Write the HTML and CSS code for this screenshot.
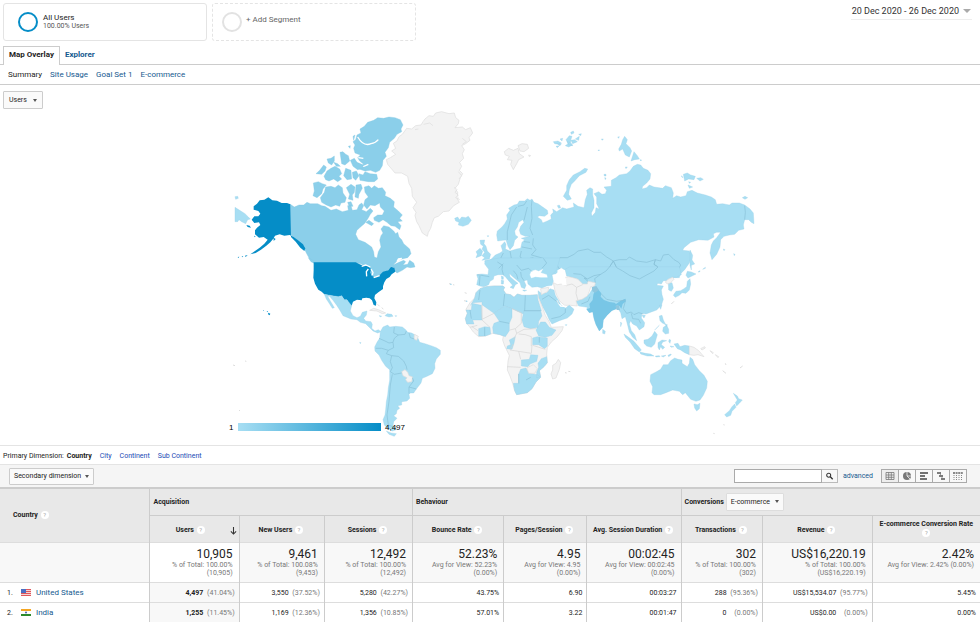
FILE: index.html
```html
<!DOCTYPE html>
<html lang="en">
<head>
<meta charset="utf-8">
<title>Location report</title>
<link rel="stylesheet" href="styles.css">
</head>
<body>
<header class="top">
  <button class="segment" type="button">
    <span class="ring"></span>
    <span class="segment-text"><span class="segment-name">All Users</span><span class="segment-sub">100.00% Users</span></span>
  </button>
  <button class="segment add" type="button">
    <span class="ring"></span>
    <span class="segment-text">+ Add Segment</span>
  </button>
  <button class="date" type="button">20 Dec 2020 - 26 Dec 2020 <span class="caret"></span></button>
</header>

<nav class="tabs">
  <a class="tab active" href="#map">Map Overlay</a>
  <a class="tab" href="#explorer">Explorer</a>
</nav>
<nav class="subtabs">
  <a class="current" href="#summary">Summary</a>
  <a href="#usage">Site Usage</a>
  <a href="#goals">Goal Set 1</a>
  <a href="#ecommerce">E-commerce</a>
</nav>

<main>
<section class="map" id="map">
  <button class="drop" type="button">Users <span class="caret"></span></button>
  <svg class="world" viewBox="220 109 540 331" role="img" aria-label="Users by country">
    <defs>
      <linearGradient id="scale"><stop offset="0" stop-color="#a7def3"/><stop offset="1" stop-color="#058dc7"/></linearGradient>
    </defs>

    <!-- North America, northern part -->
    <g transform="translate(225 105) scale(.33333)">
      <path class="none" d="M600,42L612,32 625,34 632,24 650,20 672,26 688,24 692,38 702,46 700,56 690,68 712,66 722,74 736,68 743,84 732,98 735,106 722,116 710,122 718,134 712,146 716,160 704,172 710,184 703,196 713,206 706,218 700,238 690,250 698,262 697,282 703,292 686,302 672,318 655,320 640,334 628,338 622,352 617,370 610,382 607,394 592,384 582,362 575,350 570,332 573,322 564,308 575,292 562,274 560,250 552,235 548,214 530,204 510,204 500,192 488,178 484,164 496,158 512,148 500,138 512,130 505,115 516,108 522,95 532,88 545,70 560,72 572,62 588,60 594,50Z"/>
      <path class="none" d="M688,246l8,8-6,8 10,8-8,8 12,6M700,200l10,12-8,10M712,100l12,10-12,8M596,58l18-4 10 8M570,74l10-2"/>
      <path class="mid" d="M405,72L418,64 428,52 446,46 458,38 476,40 492,36 510,38 526,44 534,60 528,72 530,80 516,88 508,100 494,112 490,128 480,142 484,154 474,166 472,182 464,196 452,202 436,196 420,198 402,192 398,182 416,178 404,168 398,158 406,150 390,144 386,130 390,120 384,110 392,104 396,90 408,84Z"/>
      <path class="gap" d="M398,96Q416,126 438,116 452,114 460,104M400,158L415,160M412,186L430,178"/>
      <path class="mid" d="M402,206L414,210 420,200 436,206 455,208 458,222 448,230 430,230 405,226ZM345,142L354,140 362,148 370,152 374,168 360,180 350,176ZM376,166L388,160 396,172 410,178 416,188 398,194 384,184ZM306,162L318,160 328,153 328,168 320,180 310,174ZM273,206L284,196 296,180 304,186 300,198 290,208ZM297,214L306,198 318,190 330,184 344,192 350,206 342,214 350,222 338,230 326,222 312,228 302,224ZM326,172L338,176 346,184 334,184ZM362,190L378,196 380,222 366,224 356,212ZM382,202L394,198 402,212 392,226 384,218ZM384,94L390,90 386,106ZM370,124l6-2-1,8z"/>
      <path class="mid" d="M265,234L280,230 292,236 304,240 294,252 290,266 276,278 264,272 268,258ZM286,278L298,262 302,246 318,244 330,248 340,240 352,248 354,264 364,278 360,292 348,294 344,304 332,300 318,306 304,300 290,292ZM364,248L378,238 390,246 388,262 382,270 384,286 370,282 374,268ZM393,240L408,238 412,250 402,268 400,280 390,276ZM368,292l10-2 6,14-12,0z"/>
      <path class="mid" d="M418,246L432,242 440,250 448,242 460,250 472,248 482,262 480,272 496,280 508,290 506,306 520,318 532,330 524,340 532,348 518,350 528,362 524,374 510,364 498,362 486,352 474,344 462,352 448,346 446,338 458,330 472,330 478,318 466,306 464,294 450,302 436,300 426,312 416,300 420,284 430,276 420,262Z"/>
      <path class="mid" d="M196,298L208,306 222,300 236,300 246,292 256,296 278,296 290,302 300,304 318,316 334,312 352,320 370,316 368,302 378,302 382,316 396,314 402,300 410,294 416,302 410,314 424,320 436,310 444,318 436,328 428,342 418,356 404,368 396,376 392,388 400,404 420,412 440,426 446,440 448,456 456,459 460,440 468,426 464,406 468,392 474,384 468,372 476,362 492,366 506,378 512,386 518,382 522,396 530,404 536,416 554,432 558,446 548,458 530,462 514,470 504,480 522,472 536,466 542,470 534,480 548,478 554,466 566,474 570,486 556,488 546,486 532,496 516,504 510,498 506,486 494,492 482,500 468,508 454,516 442,515 436,500 424,488 408,476 392,474 272,474 262,470 254,462 246,448 240,436 238,424 220,408 206,396 196,390Z"/>
      <path class="gap" d="M520,462l10-2-14,10zM426,360l16-6 10,6"/>
      <path class="mid" d="M422,352l10-6 14,10-6,6zM250,458l16,10 4,8-12-6z"/>
      <path class="high" d="M196,298L186,294 170,294 156,287 142,286 130,277 118,284 104,286 96,296 86,304 86,314 100,318 106,326 100,334 88,334 80,344 88,354 102,352 106,360 96,368 90,376 90,388 102,398 116,396 128,404 118,416 104,428 90,438 76,448 92,444 108,434 124,422 136,412 146,400 150,392 164,388 178,392 194,390 206,396 222,408 234,418 241,430 238,438 226,428 212,410 198,396ZM146,398l6,4-6,6zM64,360l10,2 4,6-10-2zM60,452l8-2-6,6zM38,456l5-1-3,4zM50,454l5,0-3,3zM88,392l4,2-4,3z"/>
      <path class="low" d="M30,307L44,316 60,326 70,336 76,342 68,344 62,356 50,350 42,344 38,350 30,350ZM30,275l8-1 2,6-8,3z"/>
      <path class="low" d="M689,340L698,336 704,344 710,336 722,338 730,334 739,346 730,358 714,364 700,360 702,352 692,348Z"/>
    </g>

    <!-- United States, Central and South America -->
    <g transform="translate(225 255) scale(.33333)">
      <path class="high" d="M266,22L392,22 404,28 416,32 428,32 438,42 436,52 440,62 448,66 462,62 474,50 490,46 498,36 508,38 511,50 500,58 494,66 484,72 478,82 474,94 474,102 460,112 450,120 448,130 454,142 453,152 446,150 441,136 434,130 424,128 412,130 410,136 396,134 384,140 380,152 372,146 366,134 358,134 350,122 340,125 322,122 298,118 290,110 280,104 270,86 265,68 266,46Z"/>
      <path class="gap" d="M410,34L422,30 436,36M425,64L424,50 430,42M438,42L444,52 442,60M446,68L464,62"/>
      <path class="high" d="M130,173l6,3-2,5-5-3zM125,168l4,1-2,3zM114,165l3,1-2,2z"/>
      <path class="low" d="M298,118L322,122 340,125 350,122 358,134 366,134 380,152 376,168 384,182 396,188 406,184 412,172 426,168 424,180 416,190 422,198 438,200 442,208 440,220 450,228 460,224 468,230 458,234 444,228 432,216 422,206 406,202 396,194 378,192 354,182 346,168 336,152 324,136 314,124 308,124 316,138 328,158 322,160 312,144 304,132Z"/>
      <path class="none" d="M434,166L446,160 460,164 482,174 472,176 456,168Z"/>
      <path class="low" d="M480,182L486,176 500,178 504,184 492,186ZM462,182l8,1-3,3zM510,182l5,0-2,3zM404,262l4,1-2,3z"/>
      <path class="low" d="M466,230L474,216 488,210 494,216 512,214 532,216 542,224 548,232 560,234 574,242 580,252 584,262 600,266 618,272 634,278 646,286 646,298 634,312 629,326 630,340 622,356 606,364 592,370 588,384 574,402 566,414 556,414 552,418 554,430 546,438 530,440 530,450 518,452 524,460 516,466 514,476 506,482 516,490 506,500 504,512 514,524 502,528 488,520 478,510 474,494 480,480 482,464 484,440 488,420 490,398 494,376 494,344 482,334 470,316 462,300 450,288 449,276 456,262 464,250Z"/>
      <path class="low" d="M484,528L498,534 514,536 508,544 492,538Z"/>
      <path class="none" d="M530,350L540,344 548,352 552,362 563,366 560,380 548,382 542,374 546,368 534,362ZM568,238L580,244 575,256 567,252Z"/>
      <path class="line" d="M508,216L506,234 520,240 508,250 504,262 492,264 480,258 462,250M520,240L540,238 544,228M552,234L556,248 568,252M504,262L506,278 490,286 484,296 500,302 520,304 536,318 544,334 546,344M490,286L470,280 452,280M500,302L496,320 502,338 496,350 508,358 530,354M502,358L496,390 492,440 486,480 490,510 506,516M562,368L566,378 552,396 552,416M552,396L574,402"/>
      <path class="faint" d="M24,330l6,2M60,318l4,1M42,466l3,1M458,148l6,6M470,158l5,4M672,86l6,1M684,89l4,1"/>
    </g>

    <!-- Europe and northern Asia -->
    <g transform="translate(450 125) scale(.33333)">
      <path class="low" d="M143,348L140,330 142,318 156,306 164,296 172,282 170,270 180,256 176,250 192,240 202,238 208,228 224,228 232,221 240,226 246,222 252,232 264,236 278,246 292,256 294,266 284,274 268,272 262,276 274,284 278,294 292,288 304,282 302,270 310,262 308,252 320,260 338,248 350,252 372,246 370,234 384,244 402,248 406,224 412,208 410,196 420,188 428,192 428,210 432,226 432,248 424,264 426,274 436,262 438,248 448,252 440,236 440,216 432,206 446,200 456,208 466,206 470,196 462,186 484,184 484,166 498,158 508,150 530,146 540,138 550,124 562,118 572,120 580,130 594,136 602,146 600,162 590,174 578,184 576,192 590,188 598,180 612,186 638,190 646,182 664,188 670,204 668,220 680,212 692,216 708,212 712,200 726,196 742,204 766,210 784,216 796,224 800,238 818,236 838,240 846,234 868,234 884,240 900,252 910,264 912,296 904,292 896,284 884,284 880,300 882,312 866,316 854,328 838,330 822,334 812,344 810,366 800,388 786,404 780,384 784,360 790,348 800,338 812,322 800,322 790,326 792,336 774,346 746,344 722,352 702,368 698,376 718,378 724,394 718,414 704,434 690,448 688,458 360,456 346,434 330,432 318,446 300,450 280,444 240,446 200,440 140,440 115,420 104,408 122,404 136,390 150,384 158,378 153,362 164,350 168,358 166,372 180,378 200,372 212,370 216,352 224,344 214,340 240,334 226,334 212,328 208,316 212,304 222,292 218,284 206,292 202,306 194,318 196,330 204,336 194,346 190,362 180,374 174,364 168,345 158,346Z"/>
      <path class="low" d="M90,346L104,345 102,356 108,364 112,378 122,388 118,402 96,406 104,398 96,392 104,382 96,372 100,364 92,358ZM78,380L90,370 98,378 94,392 78,398 82,388Z"/>
      <path class="low" d="M340,214L350,196 350,182 358,164 370,150 390,140 404,130 413,132 408,142 388,152 374,168 364,178 358,194 356,208 364,222 352,226ZM322,242l6-2 4,8-6,2zM462,148l6,0 0,5-5,0zM464,158l4,1-2,5z"/>
      <path class="low" d="M506,72L514,58 518,44 524,34 532,44 528,56 540,68 545,78 538,96 526,90 518,72 508,78ZM543,108L552,80 562,92 568,102 554,104ZM503,36l5-1-2,5zM526,126l6,0-4,5zM570,104l5,1-3,3z"/>
      <path class="low" d="M310,50l14-2 10,6-8,4-12-2zM330,42l8-2-2,8zM348,44l10-12 8,2-4,12 12-2 8,6-14,6-4-8-10,8zM346,62l8-6 14,4-12,6zM362,22l8-4 2,6-8,4zM376,42l12-8-2,12zM386,28l8-2-2,6zM318,64l10-2-6,6zM454,42l6,0-3,4zM444,75l5,0-3,3zM352,50l10,2 6,10-12-2zM322,56l12,0-4,6z"/>
      <path class="low" d="M700,148L712,144 722,150 736,154 732,164 716,162 704,168ZM740,160L752,158 760,163 750,168ZM714,180L728,186 718,190ZM695,152l4,6-4,-2zM877,218l8-4 8,4-8,5zM716,170l6,2-4,3z"/>
      <path class="none" d="M163,80L176,70 190,76 204,70 208,86 222,96 206,104 200,116 190,134 182,118 186,106 172,104 178,94 166,90ZM204,62L216,56 232,58 236,70 222,80 210,78ZM236,90l6,2-4,3z"/>
      <path class="line" d="M246,226L244,244 246,280 240,310 248,330M230,228L222,240 204,244M200,246L184,270 178,296 172,320 172,345M232,246L226,270 222,286M884,242L886,262 884,284"/>
      <path class="line" d="M318,410L330,398 352,398 372,388 384,378 414,372 432,382 452,382 470,396 490,408 508,404 530,404 538,396 560,408 590,412 616,404 632,408 640,390 656,388 672,404 686,412 692,420 684,436 690,448M490,408L480,424 468,438 452,448 432,452 412,462 392,448 370,446M490,408L500,428 518,438 540,452 568,462 590,450 612,438 624,426 612,418 616,404M250,340L248,360 258,374 244,390 280,400 290,414 276,430M222,350L240,352M216,366L246,372M214,378L210,396 222,404 250,398M180,378L184,400 206,406 222,404M160,384L152,400 160,416 146,430M184,400L164,404M206,406L200,420 184,420 160,416M200,420L214,436 236,430 246,440M222,404L218,420M318,410L326,430 336,432"/>
      <path class="low" d="M820,372l5,2-3,3zM851,386l4,2-2,4zM112,332l4,0-2,4z"/>
    </g>

    <!-- Southern Europe, Africa, southern Asia and Oceania -->
    <g transform="translate(450 240) scale(.33333)">
      <path class="low" d="M105,62L124,58 150,54 330,54 320,90 306,104 310,124 306,136 290,138 276,144 262,140 246,142 234,132 232,120 222,122 228,136 224,146 214,142 210,128 200,120 186,108 178,100 180,110 194,122 204,130 196,134 190,146 180,142 188,136 176,122 166,110 158,104 144,104 132,108 130,118 120,124 116,134 102,140 90,138 80,134 84,116 80,104 96,102 114,104 116,88 104,72Z"/>
      <path class="low" d="M154,108l6,2 0,8-5,0zM154,120l7,2-1,10-6,0zM218,150l12,1-8,3z"/>
      <path class="gap solid" d="M244,94L256,90 266,94 278,88 272,98 290,104 292,112 272,112 256,110 244,114 240,104Z"/>
      <path class="low" d="M345,88L360,80 688,80 694,104 680,112 666,112 652,122 640,122 634,132 624,130 620,136 640,138 634,150 636,164 640,178 634,196 620,210 604,216 588,222 576,220 574,234 584,248 582,260 568,270 560,258 548,252 542,242 538,252 544,272 554,284 560,302 548,292 538,276 532,252 526,230 516,236 512,218 504,206 495,205 484,212 470,226 460,240 458,262 448,273 438,254 432,236 428,215 418,218 410,208 412,202 386,198 378,184 400,175 418,162 430,142 428,130 400,134 380,116 350,108Z"/>
      <path class="none" d="M310,128L322,134 336,132 350,138 346,112 356,110 372,114 384,118 398,132 412,132 414,124 436,128 434,138 422,140 418,154 412,168 396,178 378,182 382,198 362,196 344,196 330,184 320,166 314,148Z"/>
      <path class="edge" d="M350,136L366,132 380,142 378,160 384,182M380,142L398,134"/>
      <path class="gap solid" d="M322,92L334,84 344,92 338,102 348,116 350,136 336,134 334,120Z"/>
      <path class="low" d="M264,152L274,160 290,158 300,146 312,150 316,166 326,182 332,194 346,204 358,196 372,208 366,222 352,234 328,242 306,252 298,240 290,222 278,200 266,174Z"/>
      <path class="none" d="M272,146L296,142 294,154 274,164Z"/>
      <path class="gap" d="M320,182L332,198 350,200"/>
      <path class="line" d="M276,178L296,166 330,192M304,236L330,230 346,218 346,206"/>
      <path class="line" d="M490,63L480,79 468,93 452,103 432,107 412,117 392,103 370,101M490,63L500,83 518,93 540,107 568,117 590,105 612,93 624,81 612,73 616,59M276,85L290,69 280,55M200,75L214,91 236,85 246,95M160,71L146,85M212,96L214,110 222,122M190,92L200,104 204,118M82,104L118,110M90,108L88,136M142,66L158,76 156,88 160,104M414,124L402,114 412,117M436,128L434,116 452,103"/>
      <path class="india" d="M436,148L446,150 454,160 452,170 462,180 478,186 494,188 498,192 512,182 526,176 528,184 518,192 514,206 508,198 500,196 498,208 486,212 472,226 460,240 458,262 448,273 438,254 432,236 428,216 418,218 410,208 420,204 418,192 428,180 430,164Z"/>
      <path class="low" d="M458,268L466,274 464,282 458,280ZM512,246l3,4-3,10zM576,226l10,0-4,8zM628,196l8-2-4,14z"/>
      <path class="shade" d="M425,142l14-4 8,12-12,8-8-4zM496,198l10-2 4,14-10,0z"/>
      <path class="line" d="M526,184L520,206 530,220M530,220L544,216 552,224 566,218 580,222M544,220L548,236 566,238 572,250M528,180L500,184 470,178 452,160M420,170L414,184 394,192"/>

      <path class="none" d="M90,146L108,140 132,138 158,138 164,142 160,150 168,162 182,164 192,172 202,162 216,166 240,166 262,164 270,184 278,204 286,226 298,246 304,262 340,260 336,272 322,290 304,306 292,322 290,342 292,368 282,380 268,392 272,412 258,426 246,446 232,458 200,464 194,452 188,430 180,408 172,390 174,364 178,346 170,330 164,318 158,300 160,288 150,284 128,280 106,288 86,290 70,276 60,262 50,250 46,236 52,220 48,208 60,188 74,174 78,158Z"/>
      <path class="low" d="M90,146L108,140 132,138 158,138 164,142 160,150 168,162 182,164 192,172 202,162 216,166 240,166 262,164 264,180 274,212 222,212 220,222 186,206 164,198 132,220 96,194 96,186 66,188 62,196 74,174 78,158Z"/>
      <path class="low" d="M132,220L164,198 186,206 186,232 178,250 178,272 166,290 150,284 130,280 128,262 132,250 148,244ZM48,210L64,210 66,190 94,196 96,240 68,240 72,252 50,252 46,236 52,220ZM86,266L104,260 120,262 122,282 106,288 86,288ZM222,212L272,212 276,228 266,244 264,262 242,266 222,260 216,240ZM272,246L286,246 298,262 318,270 306,286 286,292 266,288 258,270ZM248,294L262,290 292,294 292,318 284,326 266,314 248,314ZM178,300L196,290 192,310 186,328 170,326 172,318 182,314ZM214,360L238,358 242,344 264,346 260,364 240,372 234,380 214,378ZM264,370L274,356 290,350 292,368 282,380 268,392 272,410 260,414 260,396 266,382ZM190,430L206,430 206,402 212,388 228,384 238,400 262,404 272,412 258,426 246,446 232,458 200,464 194,452Z"/>
      <path class="line" d="M164,162L160,198M226,166L224,212M90,150L86,180M60,210L64,236M148,244L178,250M104,262L104,288M206,402L206,430M228,420L242,412M222,212L272,212M268,308L268,292"/>
      <path class="edge" d="M186,206L214,218 214,250 196,266 180,270M196,266L200,280 190,300M200,280L222,268 258,266M190,312L180,330 206,334 212,358M206,334L244,340 246,316M172,380L212,382M120,262L96,240M66,260L84,272M248,316L286,328M96,194L96,238 132,220M244,318L244,290 226,284 206,282M60,262L82,256"/>
      <path class="none" d="M325,358L332,368 328,388 318,414 308,417 303,402 308,390 308,376 318,370ZM230,384L250,374 262,386 254,400 236,400Z"/>

      <path class="low" d="M602,404L618,396 632,388 640,374 654,374 662,362 674,354 684,358 696,360 696,370 712,380 718,370 720,352 728,358 734,374 748,392 762,406 772,424 770,444 760,466 750,480 738,484 722,478 714,468 706,458 698,464 688,454 668,450 648,458 632,464 612,464 606,458 608,440 600,424ZM732,492L742,494 750,490 748,506 740,513 734,504Z"/>
      <path class="low" d="M850,460L862,468 866,476 877,480 868,490 860,498 856,488 862,480ZM854,492L858,502 846,514 842,526 830,531 824,524 838,512 846,500Z"/>
      <path class="low" d="M522,282L536,292 552,304 566,320 574,330 568,336 554,326 540,306 526,292ZM570,336L586,340 602,342 612,348 592,348 572,342ZM616,348l12-1 2,3-12,1zM634,348l14-2-8,5zM654,346l8-4 2,2-8,6zM582,300L594,298 606,288 614,274 622,284 618,298 614,312 604,322 590,318 582,310ZM624,308L636,300 650,302 638,306 634,314 644,322 638,328 632,320 628,330 624,322ZM658,298l4,2-2,10-4-6zM660,318l12,2-8,2zM672,312L684,310 690,320 704,316 718,318 718,344 704,338 692,330 682,326Z"/>
      <path class="low" d="M628,228L636,226 640,240 646,252 638,250 630,242ZM640,262L650,256 656,268 656,280 646,282 638,274ZM614,270L628,256 618,266ZM644,252l8,2-2,6z"/>
      <path class="none" d="M718,318L732,322 746,332 762,350 744,344 732,346 718,344ZM752,326l12-6 2,4-10,6zM780,332l10,6-2,3zM796,344l10,6-2,3z"/>
      <path class="low" d="M670,166L678,154 692,152 702,146 710,140 712,124 720,116 722,132 718,150 708,160 696,158 688,166 676,172ZM712,94L724,96 738,102 726,108 714,114 708,106ZM655,130L666,128 670,144 664,154 656,150ZM720,30L728,46 726,60 734,72 724,76 724,90 720,76ZM744,96l6-4 0,3zM758,88l8-6 0,3z"/>
      <path class="none" d="M646,126L654,118 668,112 672,118 662,128 652,132Z"/>
      <path class="faint" d="M818,392l10,8M870,384l8-6M826,370l2,5M345,398l5,1M355,394l6,1M672,184l-8,8M820,554l4,1M790,580l4,1M44,158l6,2M42,182l8,2"/>
      <path class="low" d="M0,132l5,0-2,3zM48,182l4,1-2,3zM346,254l5,0-3,3z"/>
    </g>

    <rect x="238" y="423" width="143" height="8" fill="url(#scale)"/>
    <text class="legend" x="229" y="430">1</text>
    <text class="legend" x="385" y="430">4,497</text>
  </svg>
</section>

<nav class="dimensions">
  <span>Primary Dimension:</span>
  <a class="current" href="#country">Country</a>
  <a href="#city">City</a>
  <a href="#continent">Continent</a>
  <a href="#sub">Sub Continent</a>
</nav>

<div class="toolbar">
  <button class="drop" type="button">Secondary dimension <span class="caret"></span></button>
  <form class="search">
    <input type="text" aria-label="Search table">
    <button type="button" aria-label="Search"><svg viewBox="0 0 10 10"><circle cx="4" cy="4" r="2.5" fill="none" stroke="#333" stroke-width="1.3"/><path d="M6 6l3 3" stroke="#333" stroke-width="1.7"/></svg></button>
  </form>
  <a class="advanced" href="#advanced">advanced</a>
  <div class="views">
    <button type="button" aria-label="Data table"><svg viewBox="0 0 10 10"><path d="M1 1.5h8v7H1zM1 4h8M1 6.300h8M3.700 1.500v7M6.300 1.500v7" fill="none" stroke="#777" stroke-width=".8"/></svg></button>
    <button type="button" aria-label="Percentage"><svg viewBox="0 0 10 10"><circle cx="5" cy="5" r="4" fill="#777"/><path d="M5 1v4h4M5 5l3 3" fill="none" stroke="#f5f5f5" stroke-width=".8"/></svg></button>
    <button type="button" aria-label="Performance"><svg viewBox="0 0 10 10"><path d="M1 2h8M1 5h5M1 8h7" stroke="#444" stroke-width="1.6"/></svg></button>
    <button type="button" aria-label="Comparison"><svg viewBox="0 0 10 10"><path d="M1 2h4M3 5h4M5 8h4" stroke="#555" stroke-width="1.5"/><path d="M4.500 1v5M6 4v5" stroke="#777" stroke-width=".7"/></svg></button>
    <button type="button" aria-label="Pivot"><svg viewBox="0 0 10 10"><path d="M0 2h10" stroke="#666" stroke-width="1.600" stroke-dasharray="2 .6"/><path d="M1 4v5M3.500 4v5M6 4v5M8.500 4v5" stroke="#888" stroke-width="1" stroke-dasharray="1 1"/></svg></button>
  </div>
</div>

<table class="report">
  <colgroup><col class="c-country"><col class="c-users"><col class="c-new"><col class="c-sessions"><col class="c-bounce"><col class="c-pages"><col class="c-duration"><col class="c-trans"><col class="c-revenue"><col class="c-rate"></colgroup>
  <thead>
    <tr class="groups">
      <th rowspan="2" class="country">Country <span class="help">?</span></th>
      <th colspan="3">Acquisition</th>
      <th colspan="3">Behaviour</th>
      <th colspan="3"><span class="conv">Conversions <button class="drop" type="button">E-commerce <span class="caret"></span></button></span></th>
    </tr>
    <tr class="metrics">
      <th><span class="sorted"><span>Users <span class="help">?</span></span><svg viewBox="0 0 8 9"><path d="M4 0v8M1 5l3 3 3-3" fill="none" stroke="#333" stroke-width="1.2"/></svg></span></th>
      <th>New Users <span class="help">?</span></th>
      <th>Sessions <span class="help">?</span></th>
      <th>Bounce Rate <span class="help">?</span></th>
      <th>Pages/Session <span class="help">?</span></th>
      <th>Avg. Session Duration <span class="help">?</span></th>
      <th>Transactions <span class="help">?</span></th>
      <th>Revenue <span class="help">?</span></th>
      <th class="stacked">E-commerce Conversion Rate<br><span class="help">?</span></th>
    </tr>
  </thead>
  <tbody>
    <tr class="totals">
      <td></td>
      <td><strong>10,905</strong><small>% of Total: 100.00%<br>(10,905)</small></td>
      <td><strong>9,461</strong><small>% of Total: 100.08%<br>(9,453)</small></td>
      <td><strong>12,492</strong><small>% of Total: 100.00%<br>(12,492)</small></td>
      <td><strong>52.23%</strong><small>Avg for View: 52.23%<br>(0.00%)</small></td>
      <td><strong>4.95</strong><small>Avg for View: 4.95<br>(0.00%)</small></td>
      <td><strong>00:02:45</strong><small>Avg for View: 00:02:45<br>(0.00%)</small></td>
      <td><strong>302</strong><small>% of Total: 100.00%<br>(302)</small></td>
      <td><strong>US$16,220.19</strong><small>% of Total: 100.00%<br>(US$16,220.19)</small></td>
      <td><strong>2.42%</strong><small>Avg for View: 2.42% (0.00%)</small></td>
    </tr>
    <tr class="row">
      <td><span class="place"><span>1.</span><svg viewBox="0 0 10 7"><path fill="#f4d4d4" d="M0 0h10v7H0z"/><path stroke="#e0575b" d="M0 .5h10M0 2.500h10M0 4.500h10M0 6.500h10"/><path fill="#4a6fc4" d="M0 0h5v4H0z"/></svg><a href="#us">United States</a></span></td>
      <td><b>4,497</b> <i>(41.04%)</i></td><td>3,550 <i>(37.52%)</i></td><td>5,280 <i>(42.27%)</i></td>
      <td>43.75%</td><td>6.90</td><td>00:03:27</td>
      <td>288 <i>(95.36%)</i></td><td>US$15,534.07 <i>(95.77%)</i></td><td>5.45%</td>
    </tr>
    <tr class="row">
      <td><span class="place"><span>2.</span><svg viewBox="0 0 10 7"><path fill="#fff" d="M0 0h10v7H0z"/><path fill="#f5a623" d="M0 0h10v2H0z"/><path fill="#2e8b2e" d="M0 5h10v2H0z"/><circle cx="5" cy="3.500" r="1" fill="#4a5fa8"/></svg><a href="#india">India</a></span></td>
      <td><b>1,255</b> <i>(11.45%)</i></td><td>1,169 <i>(12.36%)</i></td><td>1,356 <i>(10.85%)</i></td>
      <td>57.01%</td><td>3.22</td><td>00:01:47</td>
      <td>0 <i class="wide">(0.00%)</i></td><td>US$0.00 <i class="wide">(0.00%)</i></td><td>0.00%</td>
    </tr>
  </tbody>
</table>
</main>
</body>
</html>
```
FILE: styles.css
```css
* { box-sizing: border-box; }
body {
  margin: 0;
  background: #fff;
  color: #222;
  font: 7px/10px Roboto, "Liberation Sans", sans-serif;
}
button, input { font: inherit; color: inherit; margin: 0; }
button { cursor: pointer; }
a { color: #15598f; text-decoration: none; }

/* Segments and date range */
.top { display: flex; align-items: flex-start; gap: 5px; padding: 3px 8px 5px 3px; }
.segment {
  display: flex;
  align-items: center;
  gap: 5px;
  flex: 0 1 204px;
  height: 38px;
  padding: 0 14px;
  border: 1px solid #e4e4e4;
  border-radius: 3px;
  background: #fff;
  text-align: left;
}
.ring { width: 20px; height: 20px; border: 2px solid #058dc7; border-radius: 50%; }
.segment-text { display: flex; flex-direction: column; line-height: 8px; }
.segment-name { font-size: 8px; }
.segment-sub { color: #555; }
.add { border-style: dashed; padding: 0 9px; gap: 4px; }
.add .ring { border-color: #e2e2e2; }
.add .segment-text { font-size: 8px; color: #666; padding-bottom: 4px; }
.date {
  display: flex;
  align-items: center;
  gap: 4px;
  margin-left: auto;
  padding: 2px 1px;
  border: 0;
  border-bottom: 1px solid #eee;
  background: none;
  font-size: 9px;
  line-height: 12px;
  color: #333;
}
.caret { width: 0; height: 0; border: 2px solid transparent; border-top: 3px solid #555; border-bottom: 0; }
.date .caret { border-width: 4px 4px 0; border-top-color: #aaa; }

/* Tabs */
.tabs { display: flex; height: 19px; padding-left: 3px; border-bottom: 1px solid #ccc; font-size: 8px; }
.tab { padding: 4px 5px; font-weight: 700; height: 18px; }
.tab.active { height: 19px; border: 1px solid #ccc; border-bottom: 0; background: #fff; padding-top: 3px; color: #222; }
.subtabs { display: flex; gap: 8px; height: 20px; padding: 5px 8px; border-bottom: 1px solid #ccc; font-size: 8px; }
.current { color: #222; }

/* Map */
.drop {
  display: flex;
  align-items: center;
  gap: 6px;
  height: 18px;
  padding: 0 5px;
  border: 1px solid #ccc;
  border-radius: 1px;
  background: #fafafa;
}
.map { padding: 6px 3px 5px; border-bottom: 1px solid #e4e4e4; }
.world { display: block; width: 100%; max-width: 540px; margin: 0 auto; }
.low { fill: #a7def3; stroke: #97cfe6; stroke-width: 1; }
.mid { fill: #8bcfea; stroke: #80c5e2; stroke-width: 1; }
.high { fill: #058dc7; }
.india { fill: #78c6e6; }
.shade { fill: #8fc7df; }
.none { fill: #f3f3f3; stroke: #ddd; stroke-width: 2; }
.gap { fill: none; stroke: #fff; stroke-width: 4; }
.solid { fill: #fff; stroke-width: 1; }
.line { fill: none; stroke: #88c0d6; stroke-width: 2; }
.edge { fill: none; stroke: #d4d4d4; stroke-width: 2; }
.faint { fill: none; stroke: #ddd; stroke-width: 3; }
.legend { font-size: 8px; font-family: "Liberation Sans", sans-serif; fill: #000; }

/* Dimension bar and table tools */
.dimensions { display: flex; gap: 8px; height: 19px; padding: 6px 3px; border-bottom: 1px solid #e4e4e4; line-height: 9px; }
.dimensions span { margin-right: -5px; }
.dimensions a { color: #1a4bb5; }
.dimensions .current { color: #222; font-weight: 700; }
.toolbar { display: flex; align-items: center; height: 22px; padding: 0 13px 0 9px; background: #f5f5f5; }
.toolbar .drop { height: 17px; padding: 0 4px; gap: 4px; }
.search { display: flex; margin-left: auto; }
.search input { width: 88px; height: 14px; padding: 0 3px; border: 1px solid #aaa; background: #fff; }
.search button { width: 16px; height: 14px; padding: 2px 3px; border: 1px solid #bbb; border-left: 0; background: #f8f8f8; }
.search svg, .views svg { display: block; width: 100%; height: 100%; }
.advanced { margin: 0 8px 0 5px; }
.views { display: flex; border: 1px solid #aaa; }
.views button { width: 17px; height: 12px; padding: 1px 3px; border: 0; border-left: 1px solid #aaa; background: #f8f8f8; }
.views button:first-child { width: 16px; border-left: 0; background: #eee; }

/* Report table */
.report { width: 100%; table-layout: fixed; border-collapse: collapse; border-top: 2px solid #ccc; }
.c-country { width: 15.3%; }
.c-users { width: 9.1%; }
.c-new { width: 8.7%; }
.c-sessions { width: 9%; }
.c-bounce { width: 9.3%; }
.c-pages { width: 8.5%; }
.c-duration { width: 9.6%; }
.c-trans { width: 8.3%; }
.c-revenue { width: 11.2%; }
.report th, .report td { padding: 0; border-left: 1px solid #ccc; }
.report tr.groups > :first-child, .report tbody tr > :first-child { border-left: 0; }
.report th { background: #e8e8e8; font-weight: 700; }
.groups th { height: 27px; padding-left: 3px; text-align: left; }
.groups .country { padding-left: 13px; }
.metrics th { height: 27px; padding: 4px 2px 0 0; border-top: 1px solid #ccc; line-height: 9px; }
.metrics .stacked { padding: 0; }
.stacked .help { margin-left: 0; }
.help {
  display: inline-block;
  width: 8px;
  height: 8px;
  margin-left: 1px;
  border-radius: 50%;
  background: #fff;
  color: #aaa;
  font-size: 6px;
  line-height: 8px;
  font-weight: 400;
  text-align: center;
}
.conv { display: flex; align-items: center; gap: 2px; }
.conv .drop { font-weight: 400; border-color: #ddd; padding: 0 4px; gap: 5px; }
.sorted { display: flex; align-items: center; justify-content: flex-end; gap: 25px; }
.sorted svg { width: 7px; height: 8px; }
.totals td { height: 40px; padding: 5px 6px 0 0; vertical-align: top; text-align: right; background: #f8f8f8; border-top: 1px solid #ddd; }
.totals td:nth-child(2) { background: #fff; }
.totals strong { display: block; font-size: 12px; line-height: 13px; font-weight: 400; }
.totals small { display: block; font-size: 7px; line-height: 8px; color: #777; }
.row td { height: 20px; padding: 1px 4px 0 0; text-align: right; border-top: 1px solid #ddd; }
.row td:nth-child(2) { background: #f8f8f8; }
.row i { margin-left: 2px; font-style: normal; color: #777; }
.row .wide { margin-left: 6px; }
.place { display: flex; align-items: center; padding-left: 7px; }
.place a { font-size: 8px; }
.place span { width: 14px; text-align: left; }
.place svg { width: 10px; height: 7px; margin-right: 5px; }
```
